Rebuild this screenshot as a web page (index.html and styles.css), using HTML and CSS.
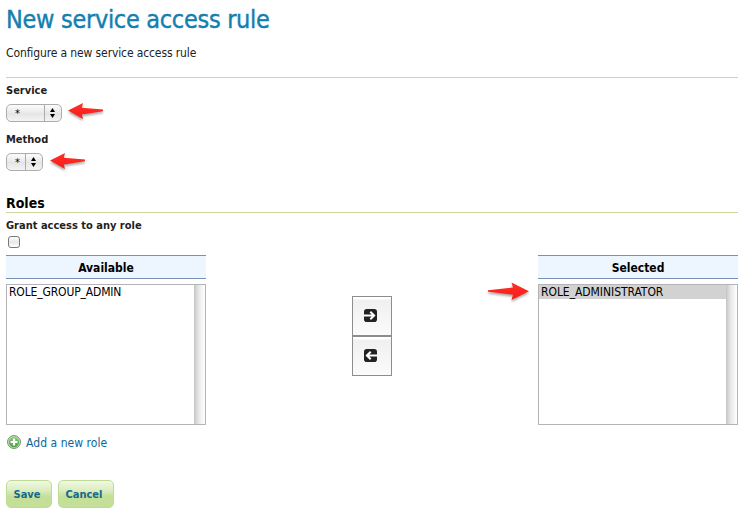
FILE: index.html
```html
<!DOCTYPE html>
<html lang="en">
<head>
<meta charset="utf-8">
<title>New service access rule</title>
<link rel="stylesheet" href="styles.css">
</head>
<body>
<svg class="defs" width="0" height="0" aria-hidden="true">
  <defs>
    <linearGradient id="red" x1="0" y1="0" x2="0" y2="1"><stop offset="0" stop-color="#ff3028"/><stop offset="1" stop-color="#f81c16"/></linearGradient>
    <linearGradient id="green" x1="0" y1="0" x2="0" y2="1"><stop offset="0" stop-color="#8fcb82"/><stop offset="1" stop-color="#4fa044"/></linearGradient>
    <symbol id="arrow" viewBox="0 0 36 18"><path fill="url(#red)" d="M0 7.6 L15 0 L13.8 4.8 L35 6.4 V8.2 L13.8 11.6 L15 16 Z"/></symbol>
  </defs>
</svg>
<main class="page">
  <header class="page-header">
    <h1>New service access rule</h1>
    <p class="intro">Configure a new service access rule</p>
  </header>
  <form>
    <div class="field">
      <label class="label service-label">Service</label>
      <div class="control">
        <div class="select wide"><span class="value">*</span><span class="stepper"><svg width="5" height="10" viewBox="0 0 5 10"><path d="M2.5 0L5 4.1H0zM0 5.9h5L2.5 10z"/></svg></span></div>
        <svg class="arrow service-arrow" width="36" height="18"><use href="#arrow"/></svg>
      </div>
    </div>
    <div class="field">
      <label class="label method-label">Method</label>
      <div class="control">
        <div class="select"><span class="value">*</span><span class="stepper"><svg width="5" height="10" viewBox="0 0 5 10"><path d="M2.5 0L5 4.1H0zM0 5.9h5L2.5 10z"/></svg></span></div>
        <svg class="arrow method-arrow" width="36" height="18"><use href="#arrow"/></svg>
      </div>
    </div>
    <h2>Roles</h2>
    <label class="label grant-label">Grant access to any role</label>
    <span class="checkbox"></span>
    <div class="palette">
      <section class="list">
        <h3 class="available">Available</h3>
        <div class="box"><div class="options"><div class="option group-option">ROLE_GROUP_ADMIN</div></div><div class="track"></div></div>
      </section>
      <div class="movers">
        <button type="button" class="mover" aria-label="Add"><svg width="13" height="13" viewBox="0 0 13 13"><rect width="13" height="13" rx="2.8" fill="#222"/><path d="M0 6.5h10M6.3 2.8L10.1 6.5 6.3 10.2" fill="none" stroke="#fff" stroke-width="2"/></svg></button>
        <button type="button" class="mover" aria-label="Remove"><svg width="13" height="13" viewBox="0 0 13 13"><rect width="13" height="13" rx="2.8" fill="#222"/><path d="M13 6.5H3M6.7 2.8L2.9 6.5 6.7 10.2" fill="none" stroke="#fff" stroke-width="2"/></svg></button>
      </div>
      <section class="list">
        <h3 class="selected-title">Selected</h3>
        <div class="box"><div class="options"><div class="option chosen">ROLE_ADMINISTRATOR</div></div><div class="track"></div></div>
        <svg class="callout" width="43" height="20" viewBox="0 0 43 20"><path fill="url(#red)" d="M0 9.8V8.2L25 5.6L23.5 .5L41 9.2L23.5 18L25 12.8z"/></svg>
      </section>
    </div>
    <a class="add"><svg width="14" height="14" viewBox="0 0 14 14"><circle cx="7" cy="7" r="6.4" fill="#d5ebcf" stroke="#5a8f52"/><circle cx="7" cy="7" r="5.2" fill="url(#green)"/><path d="M7 3.6v6.8M3.6 7h6.8" stroke="#fff" stroke-width="2.2"/></svg><span>Add a new role</span></a>
    <div class="actions"><button type="button" class="action save">Save</button><button type="button" class="action cancel">Cancel</button></div>
  </form>
</main>
</body>
</html>
```
FILE: styles.css
```css
* { box-sizing: border-box; }
body { margin: 0; background: #fff; color: #222; font: 12px/16px "DejaVu Sans Condensed", "DejaVu Sans", sans-serif; font-stretch: condensed; overflow: hidden; }
.defs { position: absolute; }
.page { width: 738px; padding-left: 6px; white-space: nowrap; }
h1, h2, h3, p { margin: 0; }
.page-header { height: 78px; border-bottom: 1px solid #cbd9a0; padding-top: 4px; }
h1 { font-size: 25px; line-height: 32px; font-weight: 400; color: #1380b0; letter-spacing: -.3px; -webkit-text-stroke: .4px #1380b0; }
.intro { margin-top: 9px; letter-spacing: -.12px; }
.field { height: 49px; padding-top: 5px; }
.label { display: block; font-weight: 700; font-size: 11px; }
.control { display: flex; margin-top: 5px; height: 18px; }
.select { display: flex; width: 37px; height: 18px; border: 1px solid #adadad; border-radius: 5px; background: linear-gradient(#fbfbfb, #e9e9e9 50%, #e4e4e4 51%, #f4f4f4); color: #000; }
.select.wide { width: 56px; }
.value { flex: 1; padding-left: 8px; line-height: 18px; font-size: 11px; }
.stepper { width: 17px; border-left: 1px solid #aaa; padding-right: 1px; display: flex; align-items: center; justify-content: center; }
.arrow { filter: drop-shadow(0 2px 1px #0005); overflow: visible; }
.service-arrow { margin: -1px 0 0 6px; }
.method-arrow { margin: 0 0 0 7px; }
h2 { height: 37px; padding-top: 19px; border-bottom: 1px solid #cbd9a0; font-size: 14px; line-height: 17px; color: #000; }
.grant-label { margin-top: 5px; }
.checkbox { display: block; width: 12px; height: 12px; margin: 2px 0 7px 2px; border: 1px solid #777; border-radius: 3px; background: linear-gradient(#fff, #e8e8e8 50%, #fff); }
.palette { display: flex; justify-content: space-between; height: 170px; }
.list { width: 200px; position: relative; }
h3 { height: 24px; border: solid #7892b5; border-width: 1px 0; background: #edf5ff; font-size: 12px; line-height: 24px; text-align: center; color: #000; }
.box { display: flex; margin-top: 5px; height: 141px; border: 1px solid #b4b4b4; background: #fff; }
.options { flex: 1; }
.option { height: 14px; padding-left: 2px; font-size: 12px; line-height: 15px; letter-spacing: -.05px; color: #000; }
.group-option { letter-spacing: -.15px; }
.chosen { background: #d2d2d2; }
.track { width: 11px; background: linear-gradient(90deg, #c5c5c5, #e9e9e9 45%, #fff); }
.movers { display: flex; flex-direction: column; padding-top: 41px; }
.mover { display: flex; align-items: center; justify-content: center; width: 40px; height: 40px; padding: 0 3px 2px 0; border: 1px solid #8d8d8d; background: linear-gradient(#fff 2px, #f0f0f0 3px, #fbfbfb); }
.callout { position: absolute; left: -50px; top: 27px; filter: drop-shadow(0 2px 1px #0005); overflow: visible; }
.add { display: flex; align-items: center; gap: 5px; margin: 9px 0 0 1px; height: 16px; color: #0a6799; }
.add span { padding-top: 1px; letter-spacing: .05px; }
.actions { display: flex; gap: 6px; margin-top: 30px; }
.action { width: 46px; height: 28px; padding: 1px 4px 0 0; border: 1px solid #c0dc94; border-radius: 5px; background: linear-gradient(#f1f8e4, #dcedc0 35%, #c4df98 60%, #c5df99); color: #15698d; font: inherit; font-weight: 700; font-size: 11px; }
.cancel { width: 56px; }
```
